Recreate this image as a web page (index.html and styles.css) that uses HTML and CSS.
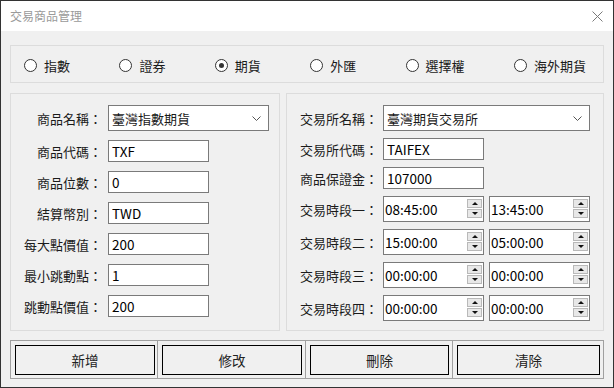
FILE: index.html
```html
<!DOCTYPE html>
<html lang="zh-Hant">
<head>
  <meta charset="UTF-8" />
  <meta name="viewport" content="width=device-width, initial-scale=1" />
  <title>交易商品管理</title>
  <link rel="stylesheet" href="styles.css">
</head>
<body>
  <div class="window">
    <header class="titlebar">
      <span class="title">交易商品管理</span>
      <svg class="close" width="11" height="11" viewBox="0 0 11 11">
        <path d="M0.5 0.5L10.5 10.5M10.5 0.5L0.5 10.5" stroke="#7a7a7a" stroke-width="1" fill="none" />
      </svg>
    </header>

    <main class="content">
      <div class="market-group">
        <label class="radio"><span class="radio-mark"></span>指數</label>
        <label class="radio"><span class="radio-mark"></span>證券</label>
        <label class="radio checked"><span class="radio-mark"></span>期貨</label>
        <label class="radio"><span class="radio-mark"></span>外匯</label>
        <label class="radio"><span class="radio-mark"></span>選擇權</label>
        <label class="radio"><span class="radio-mark"></span>海外期貨</label>
      </div>

      <div class="panels">
        <section class="panel panel-left">
          <div class="form form-left">
            <span class="label">商品名稱：</span>
            <div class="combo combo-short">
              <span>臺灣指數期貨</span>
              <svg width="9" height="5" viewBox="0 0 9 5"><path d="M0.5 0.5L4.5 4.5L8.5 0.5" fill="none" stroke="#555" /></svg>
            </div>
            <span class="label">商品代碼：</span>
            <input class="field" value="TXF" readonly />
            <span class="label">商品位數：</span>
            <input class="field" value="0" readonly />
            <span class="label">結算幣別：</span>
            <input class="field" value="TWD" readonly />
            <span class="label">每大點價值：</span>
            <input class="field" value="200" readonly />
            <span class="label">最小跳動點：</span>
            <input class="field" value="1" readonly />
            <span class="label">跳動點價值：</span>
            <input class="field" value="200" readonly />
          </div>
        </section>

        <section class="panel panel-right">
          <div class="form form-right">
            <span class="label">交易所名稱：</span>
            <div class="combo combo-long">
              <span>臺灣期貨交易所</span>
              <svg width="9" height="5" viewBox="0 0 9 5"><path d="M0.5 0.5L4.5 4.5L8.5 0.5" fill="none" stroke="#555" /></svg>
            </div>
            <span class="label">交易所代碼：</span>
            <input class="field" value="TAIFEX" readonly />
            <span class="label">商品保證金：</span>
            <input class="field" value="107000" readonly />

            <span class="label">交易時段一：</span>
            <div class="spin-pair">
              <div class="spin"><input value="08:45:00" readonly /><span class="spin-btns"><span class="up"></span><span class="down"></span></span></div>
              <div class="spin"><input value="13:45:00" readonly /><span class="spin-btns"><span class="up"></span><span class="down"></span></span></div>
            </div>
            <span class="label">交易時段二：</span>
            <div class="spin-pair">
              <div class="spin"><input value="15:00:00" readonly /><span class="spin-btns"><span class="up"></span><span class="down"></span></span></div>
              <div class="spin"><input value="05:00:00" readonly /><span class="spin-btns"><span class="up"></span><span class="down"></span></span></div>
            </div>
            <span class="label">交易時段三：</span>
            <div class="spin-pair">
              <div class="spin"><input value="00:00:00" readonly /><span class="spin-btns"><span class="up"></span><span class="down"></span></span></div>
              <div class="spin"><input value="00:00:00" readonly /><span class="spin-btns"><span class="up"></span><span class="down"></span></span></div>
            </div>
            <span class="label">交易時段四：</span>
            <div class="spin-pair">
              <div class="spin"><input value="00:00:00" readonly /><span class="spin-btns"><span class="up"></span><span class="down"></span></span></div>
              <div class="spin"><input value="00:00:00" readonly /><span class="spin-btns"><span class="up"></span><span class="down"></span></span></div>
            </div>
          </div>
        </section>
      </div>

      <div class="actions">
        <div class="cell"><button class="btn">新增</button></div>
        <div class="cell"><button class="btn">修改</button></div>
        <div class="cell"><button class="btn">刪除</button></div>
        <div class="cell"><button class="btn">清除</button></div>
      </div>
    </main>
  </div>
</body>
</html>
```

FILE: styles.css
```css
*, *::before, *::after { box-sizing: border-box; }

body {
  margin: 0;
  font-family: "Noto Sans CJK TC", "Noto Sans", sans-serif;
  font-size: 13px;
  color: #1a1a1a;
  background-color: #f0f0f0;
}

.window {
  width: 614px;
  height: 388px;
  border: 1px solid #333;
  background-color: #f0f0f0;
  display: flex;
  flex-direction: column;
}

.titlebar {
  height: 30px;
  background-color: #fff;
  display: flex;
  align-items: center;
  justify-content: space-between;
  padding: 0 10px 0 9px;
}

.title {
  font-size: 12px;
  line-height: 1;
  color: #9a9a9a;
}

.content {
  padding: 14px 9px 8px;
  display: flex;
  flex-direction: column;
}

/* market type radios */
.market-group {
  height: 38px;
  border: 1px solid #dcdcdc;
  display: flex;
  justify-content: space-between;
  align-items: flex-start;
  padding: 12px 17px 0 13px;
}

.radio {
  display: flex;
  align-items: center;
  gap: 7px;
  line-height: 15px;
}

.radio-mark {
  width: 13px;
  height: 13px;
  border: 1px solid #333;
  border-radius: 50%;
  background-color: #fff;
  position: relative;
}

.radio.checked .radio-mark::after {
  content: "";
  position: absolute;
  inset: 3px;
  border-radius: 50%;
  background-color: #333;
}

/* two panels */
.panels {
  display: flex;
  gap: 6px;
  margin-top: 10px;
  height: 238px;
}

.panel {
  border: 1px solid #dcdcdc;
  padding-top: 11px;
}

.panel-left { width: 270px; }
.panel-right { flex: 1; }

.form {
  display: grid;
  grid-template-columns: 91px auto;
  align-items: center;
  justify-items: start;
}

.form-left { column-gap: 6px; row-gap: 9px; }
.form-right { column-gap: 5px; row-gap: 7px; }

.label {
  justify-self: end;
  white-space: nowrap;
  line-height: 1;
}

.combo {
  height: 26px;
  border: 1px solid #7a7a7a;
  background-color: #fff;
  display: flex;
  align-items: center;
  justify-content: space-between;
  padding: 0 7px 0 3px;
  line-height: 1;
}

.combo-short { width: 161px; }
.combo-long { width: 207px; }

.field {
  width: 101px;
  height: 22px;
  border: 1px solid #7a7a7a;
  background-color: #fff;
  padding: 0 3px;
  font: inherit;
  font-size: 13.5px;
  color: #000;
  outline: none;
}

.spin-pair {
  display: flex;
  gap: 5px;
}

.spin {
  width: 101px;
  height: 26px;
  border: 1px solid #7a7a7a;
  background-color: #fff;
  display: flex;
  align-items: stretch;
}

.spin input {
  flex: 1;
  min-width: 0;
  border: none;
  padding: 0 0 0 1px;
  font: inherit;
  font-size: 13.5px;
  color: #000;
  background: transparent;
  outline: none;
}

.spin-btns {
  display: flex;
  flex-direction: column;
  gap: 1px;
  padding: 2px 1px 0 0;
}

.spin-btns span {
  width: 15px;
  height: 9px;
  border: 1px solid #b9b9b9;
  background-color: #e8e8e8;
  display: flex;
  align-items: center;
  justify-content: center;
}

.spin-btns .up::after {
  content: "";
  border-left: 3px solid transparent;
  border-right: 3px solid transparent;
  border-bottom: 3px solid #111;
}

.spin-btns .down::after {
  content: "";
  border-left: 3px solid transparent;
  border-right: 3px solid transparent;
  border-top: 3px solid #111;
}

/* action buttons */
.actions {
  margin-top: 9px;
  height: 39px;
  border: 1px solid #a0a0a0;
  display: grid;
  grid-template-columns: 146px 148px 147px 1fr;
}

.cell {
  padding: 4px 3px 3px 4px;
}

.cell:first-child {
  padding-right: 2px;
}

.cell + .cell {
  border-left: 1px solid #a0a0a0;
}

.btn {
  width: 100%;
  height: 100%;
  border: 1px solid #000;
  background-color: #f0f0f0;
  font: inherit;
  font-size: 13.5px;
  color: #222;
  padding: 0;
}
```
